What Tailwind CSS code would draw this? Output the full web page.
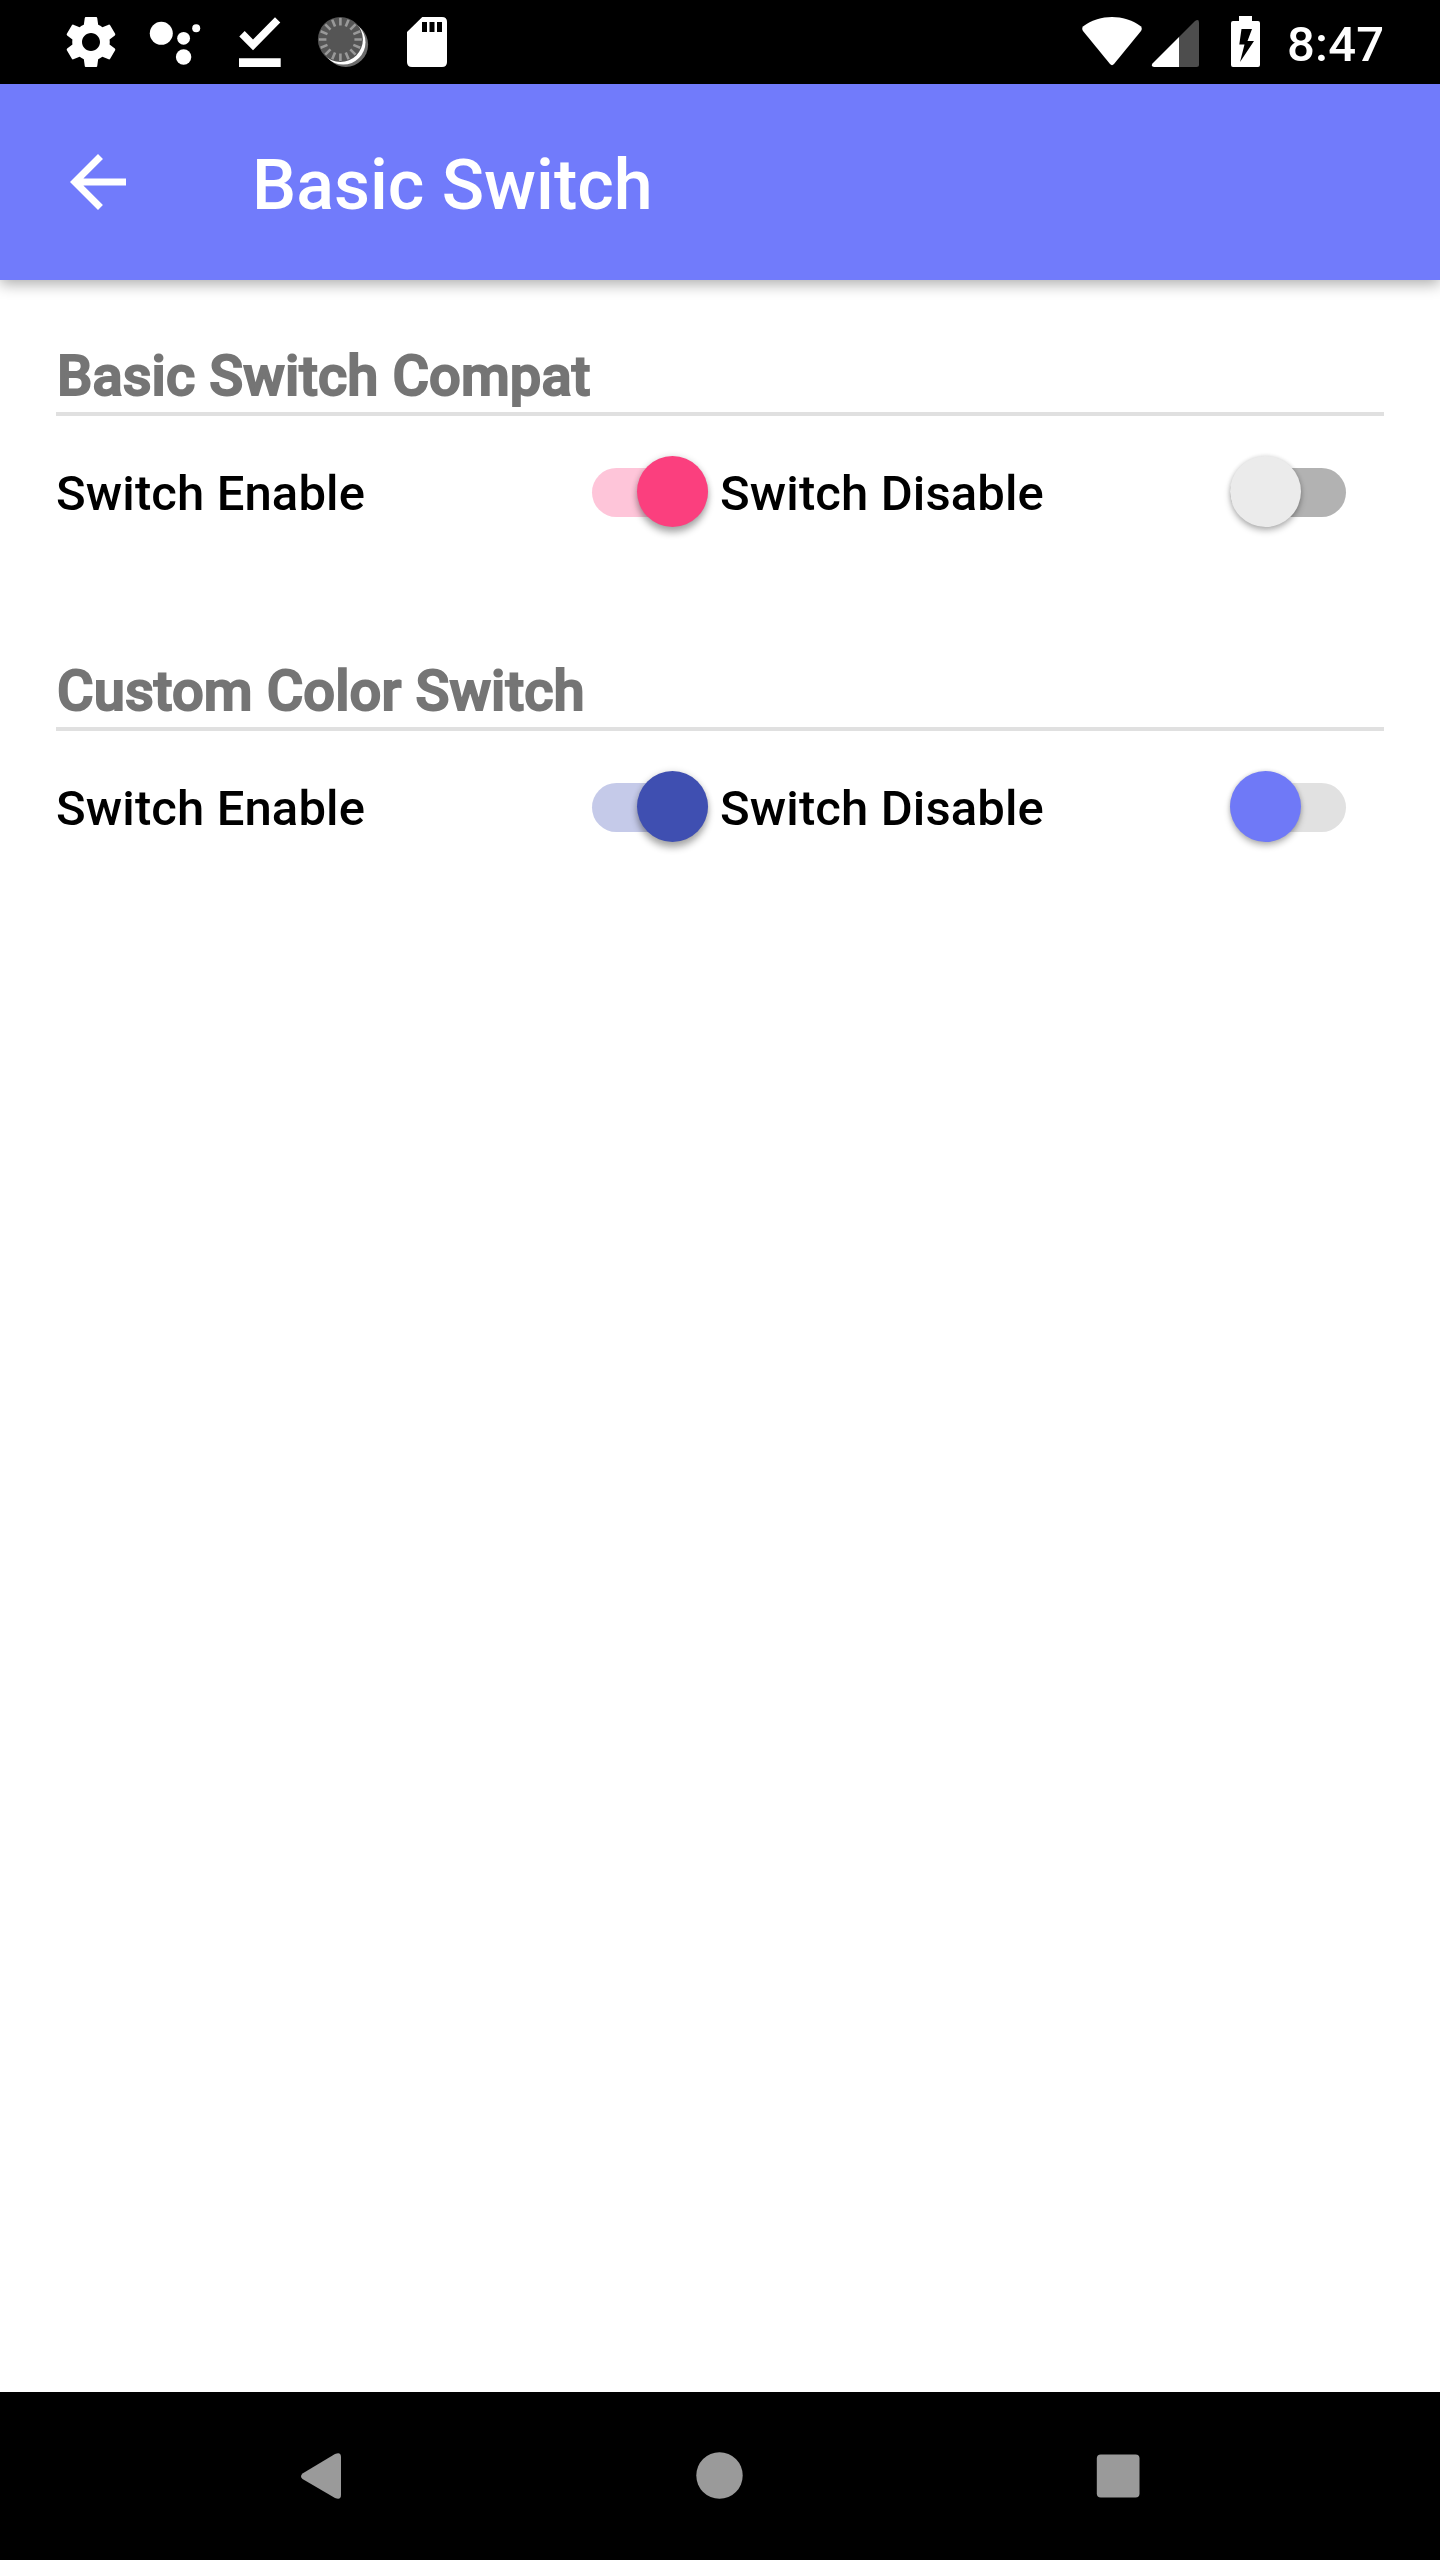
<!DOCTYPE html>
<html lang="en">
<head>
<meta charset="utf-8">
<title>Basic Switch</title>
<script src="https://cdn.jsdelivr.net/npm/@tailwindcss/browser@4"></script>
</head>
<body class="bg-white">
<div class="flex flex-col w-[1440px] h-[2560px] overflow-hidden bg-white font-['Roboto',sans-serif] font-medium">
  <!-- Status bar -->
  <div class="flex h-[84px] shrink-0 bg-black pl-[49px] text-white">
    <svg class="w-[84px] h-[84px]" viewBox="49 0 84 84" fill="#fff"><path transform="translate(61 12) scale(2.5)" d="M19.43 12.98c.04-.32.07-.64.07-.98s-.03-.66-.07-.98l2.11-1.65c.19-.15.24-.42.12-.64l-2-3.46c-.12-.22-.39-.3-.61-.22l-2.49 1c-.52-.4-1.08-.73-1.69-.98l-.38-2.65C14.46 2.180 14.250 2 14 2h-4c-.25 0-.46.18-.49.42l-.38 2.65c-.61.25-1.170.59-1.69.98l-2.49-1c-.23-.09-.49 0-.61.22l-2 3.46c-.13.22-.07.49.12.64l2.110 1.650c-.04.32-.07.65-.07.98s.03.66.07.98l-2.110 1.650c-.19.15-.24.42-.12.64l2 3.460c.12.22.39.3.61.22l2.490-1c.52.4 1.080.73 1.690.98l.38 2.650c.03.24.24.42.49.42h4c.25 0 .46-.18.49-.42l.38-2.650c.61-.25 1.170-.59 1.690-.98l2.490 1c.23.09.49 0 .61-.22l2-3.460c.12-.22.07-.49-.12-.64l-2.110-1.650zM12 15.600c-1.980 0-3.600-1.620-3.600-3.600s1.620-3.600 3.600-3.600 3.600 1.620 3.600 3.600-1.620 3.600-3.600 3.600z"/></svg>
    <svg class="w-[84px] h-[84px]" viewBox="133 0 84 84" fill="#fff"><circle cx="161.300" cy="33.300" r="11.500"/><circle cx="183.600" cy="38.300" r="6.400"/><circle cx="196.200" cy="28.200" r="4"/><circle cx="183.600" cy="57" r="7.700"/></svg>
    <svg class="w-[84px] h-[84px]" viewBox="217 0 84 84" fill="#fff"><path d="M275 17.200L280.300 22.500L253 50.300L239.300 36.500L244.700 31L253 39.500ZM239 58.300H280.700V67H239Z"/></svg>
    <svg class="w-[84px] h-[84px]" viewBox="301 0 84 84"><circle cx="345.800" cy="44.600" r="22.300" fill="#6b6b6b"/><circle cx="343.200" cy="42.300" r="22.300" fill="#fff"/><circle cx="340.400" cy="39.500" r="22.500" fill="#555"/><g stroke="#999" stroke-width="2.600"><path d="M354.400 39.500h7.400M326.400 39.500h-7.400M340.400 53.500v7.400M340.400 25.500v-7.400"/><path transform="rotate(22.500 340.400 39.500)" d="M354.400 39.500h7.400M326.400 39.500h-7.400M340.400 53.500v7.400M340.400 25.500v-7.400"/><path transform="rotate(45 340.400 39.500)" d="M354.400 39.500h7.400M326.400 39.500h-7.400M340.400 53.500v7.400M340.400 25.500v-7.400"/><path transform="rotate(67.500 340.400 39.500)" d="M354.400 39.500h7.400M326.400 39.500h-7.400M340.400 53.500v7.400M340.400 25.500v-7.400"/></g></svg>
    <svg class="w-[84px] h-[84px]" viewBox="385 0 84 84"><path fill="#fff" d="M422.300 17H442q5 0 5 5V62q0 5-5 5H412q-5 0-5-5V32Z"/><path d="M422 22h5v10h-5zM429.500 22h5v10h-5zM437 22h5v10h-5z"/></svg>
    <svg class="ml-auto w-[70px] h-[84px]" viewBox="1077 0 70 84" fill="#fff"><path d="M1083 31Q1081.300 28.500 1083.300 26.300C1092 19.800 1102 17 1112 17S1132 19.800 1140.700 26.300Q1142.700 28.500 1141 31L1114 64Q1112 66.300 1110 64Z"/></svg>
    <svg class="w-[70px] h-[84px]" viewBox="1147 0 70 84"><path fill="#4d4d4d" d="M1179 37L1195 21Q1199 18.500 1199 22.500V64.500Q1199 67 1196.500 67H1179Z"/><path fill="#fff" d="M1179 37V67H1154Q1150.500 66.500 1152.500 63.500Z"/></svg>
    <svg class="w-[56px] h-[84px]" viewBox="1217 0 56 84"><path fill="#fff" d="M1239 16h13v5h6q2 0 2 2v42q0 2-2 2h-25q-2 0-2-2V23q0-2 2-2h6z"/><path d="M1241.500 29H1252L1247.500 41H1254L1240 62L1244.500 44.500H1239.300Z"/></svg>
    <div class="w-[167px] pl-[14px] pt-4 text-[49px] leading-[57px] tracking-[0.2px]">8:47</div>
  </div>
  <!-- App bar -->
  <header class="relative flex h-[196px] shrink-0 bg-[#717bfb] pl-14 text-white shadow-[0_4px_14px_rgba(0,0,0,0.33)]">
    <svg class="mt-14 w-[84px] h-[84px]" viewBox="0 0 24 24" fill="#fff"><path d="M20 11H7.830l5.590-5.590L12 4l-8 8 8 8 1.410-1.410L7.830 13H20v-2z"/></svg>
    <h1 class="ml-28 pt-[60px] text-[70px] leading-[82px]">Basic Switch</h1>
  </header>
  <main class="flex grow flex-col px-14">
    <section class="h-[315px] pt-[63px]">
      <h2 class="h-[69px] pl-px text-[56px] leading-[66px] tracking-[0.08px] text-[#757575] [-webkit-text-stroke:2px_#757575]">Basic Switch Compat</h2>
      <div class="h-1 bg-[#e0e0e0]"></div>
      <div class="grid grid-cols-2 pt-[40px] text-[49px] leading-[72px] tracking-[0.12px] text-black">
        <div class="flex items-start justify-between">
          <span class="pt-[2px]">Switch Enable</span>
          <span class="mr-[12px] mt-3 flex h-[49px] w-[116px] items-center justify-end rounded-full bg-[#fec5d9]"><span class="size-[71px] shrink-0 -translate-y-px rounded-full bg-[#fb3f7e] shadow-[0_6px_7px_rgba(0,0,0,0.3),0_0_6px_rgba(0,0,0,0.14)]"></span></span>
        </div>
        <div class="flex items-start justify-between">
          <span class="pt-[2px]">Switch Disable</span>
          <span class="mr-[38px] mt-3 flex h-[49px] w-[116px] items-center rounded-full bg-[#b2b2b2]"><span class="size-[71px] shrink-0 -translate-y-px rounded-full bg-[#ebebeb] shadow-[0_4px_6px_rgba(0,0,0,0.26),0_0_4px_rgba(0,0,0,0.14)]"></span></span>
        </div>
      </div>
    </section>
    <section class="h-[315px] pt-[63px]">
      <h2 class="h-[69px] pl-px text-[56px] leading-[66px] tracking-[0.1px] text-[#757575] [-webkit-text-stroke:2px_#757575]">Custom Color Switch</h2>
      <div class="h-1 bg-[#e0e0e0]"></div>
      <div class="grid grid-cols-2 pt-[40px] text-[49px] leading-[72px] tracking-[0.12px] text-black">
        <div class="flex items-start justify-between">
          <span class="pt-[2px]">Switch Enable</span>
          <span class="mr-[12px] mt-3 flex h-[49px] w-[116px] items-center justify-end rounded-full bg-[#c5cae9]"><span class="size-[71px] shrink-0 -translate-y-px rounded-full bg-[#3f4fb1] shadow-[0_6px_7px_rgba(0,0,0,0.3),0_0_6px_rgba(0,0,0,0.14)]"></span></span>
        </div>
        <div class="flex items-start justify-between">
          <span class="pt-[2px]">Switch Disable</span>
          <span class="mr-[38px] mt-3 flex h-[49px] w-[116px] items-center rounded-full bg-[#e1e1e1]"><span class="size-[71px] shrink-0 -translate-y-px rounded-full bg-[#6f79f7] shadow-[0_4px_6px_rgba(0,0,0,0.26),0_0_4px_rgba(0,0,0,0.14)]"></span></span>
        </div>
      </div>
    </section>
  </main>
  <!-- Navigation bar -->
  <nav class="flex h-[168px] shrink-0 items-center bg-black pl-[291px]">
    <svg class="h-[168px] w-[60px]" viewBox="291 2392 60 168" fill="#9a9a9a"><path d="M302.500 2473.500L335 2454Q341 2451.500 341 2457V2495Q341 2500.500 335 2498L302.500 2479Q299.500 2476.300 302.500 2473.500Z"/></svg>
    <svg class="ml-[339px] h-[168px] w-[60px]" viewBox="690 2392 60 168" fill="#9a9a9a"><circle cx="719.500" cy="2475.500" r="23.200"/></svg>
    <svg class="ml-[338px] h-[168px] w-[60px]" viewBox="1088 2392 60 168" fill="#9a9a9a"><rect x="1096.800" y="2454.500" width="42.700" height="43" rx="4"/></svg>
  </nav>
</div>
</body>
</html>
